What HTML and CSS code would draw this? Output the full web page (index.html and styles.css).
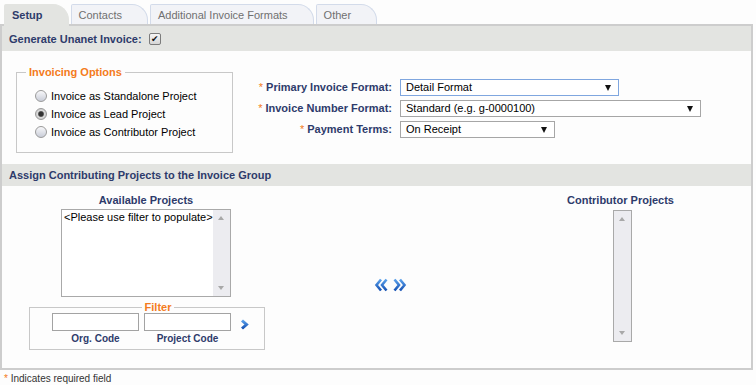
FILE: index.html
```html
<!DOCTYPE html>
<html lang="en">

<head>
    <meta charset="UTF-8">
    <meta name="viewport" content="width=device-width, initial-scale=1.0">
    <title>Invoice Setup</title>
    <link rel="stylesheet" href="styles.css">
</head>

<body>
    <div class="tabs">
        <div class="tab active">Setup</div>
        <div class="tab">Contacts</div>
        <div class="tab">Additional Invoice Formats</div>
        <div class="tab">Other</div>
    </div>

    <div class="panel">
        <div class="band">
            Generate Unanet Invoice:
            <span class="check">&#10004;</span>
        </div>

        <div class="options">
            <fieldset class="group">
                <legend>Invoicing Options</legend>
                <label class="radio"><span class="dot"></span>Invoice as Standalone Project</label>
                <label class="radio"><span class="dot on"></span>Invoice as Lead Project</label>
                <label class="radio"><span class="dot"></span>Invoice as Contributor Project</label>
            </fieldset>

            <div class="formats">
                <label class="field-label"><span class="req">*</span> Primary Invoice Format:</label>
                <div class="select focus w-primary">Detail Format</div>

                <label class="field-label"><span class="req">*</span> Invoice Number Format:</label>
                <div class="select w-number">Standard (e.g. g-0000100)</div>

                <label class="field-label"><span class="req">*</span> Payment Terms:</label>
                <div class="select w-terms">On Receipt</div>
            </div>
        </div>

        <div class="band thin">Assign Contributing Projects to the Invoice Group</div>

        <div class="assign">
            <div class="col">
                <div class="col-title">Available Projects</div>
                <div class="listbox avail">
                    <div class="list-items">&lt;Please use filter to populate&gt;</div>
                    <div class="scroll"><span class="up"></span><span class="down"></span></div>
                </div>

                <fieldset class="filter">
                    <legend>Filter</legend>
                    <div class="filter-row">
                        <div class="filter-field">
                            <span class="input"></span>
                            <span class="hint">Org. Code</span>
                        </div>
                        <div class="filter-field">
                            <span class="input"></span>
                            <span class="hint">Project Code</span>
                        </div>
                        <svg class="go" width="9" height="11" viewBox="0 0 9 11">
                            <defs>
                                <linearGradient id="blue1" x1="0" y1="0" x2="0" y2="1">
                                    <stop offset="0" stop-color="#5aa0ea" />
                                    <stop offset="1" stop-color="#1652b4" />
                                </linearGradient>
                            </defs>
                            <polyline points="2,1.5 6.5,5.5 2,9.5" fill="none" stroke="url(#blue1)"
                                stroke-width="3" />
                        </svg>
                    </div>
                </fieldset>
            </div>

            <div class="col mid">
                <svg width="14" height="14" viewBox="0 0 14 14">
                    <defs>
                        <linearGradient id="blue2" x1="0" y1="0" x2="0" y2="1">
                            <stop offset="0" stop-color="#5aa0ea" />
                            <stop offset="1" stop-color="#1652b4" />
                        </linearGradient>
                    </defs>
                    <polyline points="7,1.5 2.5,7 7,12.5" fill="none" stroke="url(#blue2)" stroke-width="2.6" />
                    <polyline points="12.5,1.5 8,7 12.5,12.5" fill="none" stroke="url(#blue2)" stroke-width="2.6" />
                </svg>
                <svg width="14" height="14" viewBox="0 0 14 14">
                    <polyline points="1.5,1.5 6,7 1.5,12.5" fill="none" stroke="url(#blue2)" stroke-width="2.6" />
                    <polyline points="7,1.5 11.5,7 7,12.5" fill="none" stroke="url(#blue2)" stroke-width="2.6" />
                </svg>
            </div>

            <div class="col">
                <div class="col-title">Contributor Projects</div>
                <div class="listbox contrib">
                    <div class="scroll"><span class="up"></span><span class="down"></span></div>
                </div>
            </div>
        </div>
    </div>

    <div class="footnote"><span class="req">*</span> Indicates required field</div>
</body>

</html>
```

FILE: styles.css
```css
* {
    box-sizing: border-box;
}

body {
    margin: 0;
    background-color: #fdfdfd;
    font-family: "Liberation Sans", Arial, sans-serif;
    font-size: 11px;
    color: #000;
}

/* tabs */

.tabs {
    display: flex;
    align-items: flex-start;
    height: 24px;
    padding: 4px 0 0 4px;
}

.tab {
    height: 20px;
    line-height: 20px;
    padding: 0 25px 0 7px;
    margin-right: 2px;
    background-color: #f2f3f7;
    border: 1px solid #d3dbea;
    border-bottom: none;
    border-radius: 2px 16px 0 0;
    color: #707070;
}

.tab.active {
    height: 22px;
    z-index: 1;
    background-color: #e3e4e1;
    border-color: #e3e4e1;
    color: #2e3b6b;
    font-weight: bold;
}

/* main panel */

.panel {
    width: 753px;
    border: 2px solid #cdcdcd;
}

.band {
    display: flex;
    align-items: center;
    gap: 7px;
    height: 25px;
    padding-left: 7px;
    background-color: #e3e4e1;
    color: #2e3b6b;
    font-weight: bold;
}

.band.thin {
    height: 22px;
}

.check {
    width: 12px;
    height: 12px;
    display: flex;
    align-items: center;
    justify-content: center;
    border: 1px solid #7c7c7c;
    border-radius: 2px;
    background: linear-gradient(#f6f6f6, #d6d6d6);
    font-family: "DejaVu Sans", sans-serif;
    font-size: 9px;
    font-weight: bold;
    color: #111;
}

.options {
    display: flex;
    align-items: flex-start;
    height: 113px;
}

.group {
    width: 217px;
    margin: 15px 0 0 14px;
    padding: 8px 0 11px 18px;
    border: 1px solid #c8c8c8;
}

.group legend,
.filter legend {
    padding: 0 3px;
    color: #f47b20;
    font-weight: bold;
}

.group legend {
    margin-left: -9px;
    line-height: 13px;
}

.radio {
    display: flex;
    align-items: center;
    height: 18px;
}

.dot {
    width: 12px;
    height: 12px;
    margin-right: 4px;
    border: 1px solid #9a9a9a;
    border-radius: 50%;
    background: linear-gradient(#f8f8fa, #c9cdd8);
}

.dot.on {
    background: radial-gradient(circle, #333 0 2px, #5a5a5a 2.5px, #d9d9d9 3.5px, #c9c9c9 6px);
}

.formats {
    display: grid;
    grid-template-columns: 150px auto;
    column-gap: 8px;
    row-gap: 4px;
    margin: 28px 0 0 9px;
}

.field-label {
    text-align: right;
    line-height: 17px;
    color: #2e3b6b;
    font-weight: bold;
}

.req {
    color: #f47b20;
    font-weight: normal;
}

.select {
    position: relative;
    height: 17px;
    line-height: 15px;
    padding-left: 5px;
    border: 1px solid #a6a6a6;
    background-color: #fff;
}

.select::after {
    content: "";
    position: absolute;
    right: 7px;
    top: 5px;
    border-left: 3.5px solid transparent;
    border-right: 3.5px solid transparent;
    border-top: 6px solid #111;
}

.select.focus {
    border-color: #7fa6df;
}

.w-primary {
    width: 219px;
}

.w-number {
    width: 301px;
}

.w-terms {
    width: 155px;
}

/* assign section */

.assign {
    display: grid;
    grid-template-columns: 288px 200px 1fr;
    height: 182px;
}

.col {
    display: flex;
    flex-direction: column;
    align-items: center;
}

.col-title {
    padding-top: 8px;
    line-height: 13px;
    color: #2e3b6b;
    font-weight: bold;
}

.listbox {
    display: flex;
    border: 1px solid #a9a9a9;
    background-color: #fff;
}

.avail {
    width: 170px;
    height: 88px;
    margin-top: 2px;
}

.list-items {
    flex: 1;
    padding: 1px 0 0 2px;
    line-height: 13px;
}

.scroll {
    position: relative;
    width: 17px;
    background-color: #ececf0;
}

.contrib {
    width: 19px;
    height: 132px;
    margin: 3px 0 0 4px;
}

.contrib .scroll {
    flex: 1;
}

.up,
.down {
    position: absolute;
    left: 5px;
    border-left: 3.5px solid transparent;
    border-right: 3.5px solid transparent;
}

.up {
    top: 6px;
    border-bottom: 4px solid #a8a8a8;
}

.down {
    bottom: 6px;
    border-top: 4px solid #a8a8a8;
}

.filter {
    width: 236px;
    margin: 5px 0 0 2px;
    padding: 0 0 4px 22px;
    border: 1px solid #c8c8c8;
    min-width: 0;
}

.filter legend {
    margin: 0 auto;
    line-height: 11px;
}

.filter-row {
    display: flex;
    align-items: flex-start;
    gap: 5px;
}

.filter-field {
    display: flex;
    flex-direction: column;
    align-items: center;
}

.input {
    width: 87px;
    height: 18px;
    border: 1px solid #a3a3a3;
    background-color: #fff;
}

.hint {
    line-height: 12px;
    margin-top: 2px;
    font-size: 10px;
    font-weight: bold;
    color: #2e3b6b;
}

.go {
    margin: 6px 0 0 4px;
}

.mid {
    flex-direction: row;
    justify-content: center;
    align-items: flex-start;
    gap: 5px;
    padding-top: 92px;
}

.footnote {
    margin-top: 3px;
    padding-left: 4px;
    line-height: 12px;
    font-size: 10px;
    color: #333;
}
```
